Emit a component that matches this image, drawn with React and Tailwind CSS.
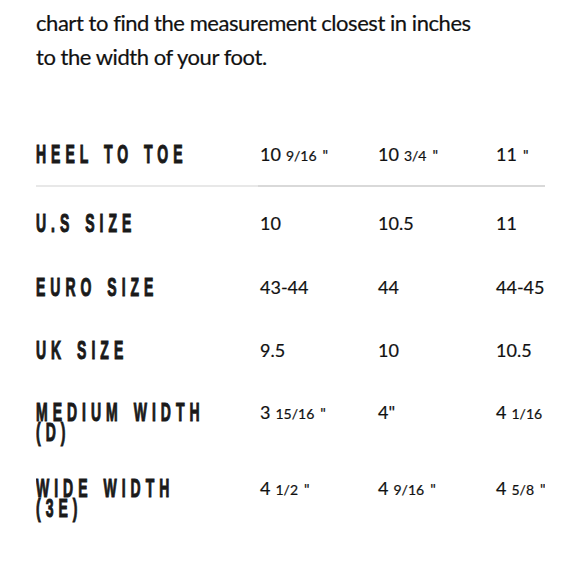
const label = "block origin-top-left scale-y-[1.8] text-[14px] leading-[10.5px] font-bold tracking-[5px] [word-spacing:2px] text-[#1a1a1a] [-webkit-text-stroke:0.6px_#1a1a1a] [font-family:'Liberation_Sans_Narrow','Liberation_Sans',sans-serif]";

function Val({ whole, frac, mark }) {
  return (
    <span className="whitespace-nowrap">
      {whole}
      {frac && <span className="ml-[5px] text-[14px]">{frac}</span>}
      {mark && <span className="ml-[6px] text-[15px]">{mark}</span>}
    </span>
  );
}

function Row({ name, values, height, divider }) {
  return (
    <div className={`flex items-start ${height}`}>
      <div className={`w-[222px] shrink-0 self-stretch ${divider ? "border-b-2 border-[#e8e8e8]" : ""}`}>
        <div className="pt-[27px]">
          {name.map((line) => (
            <div key={line} className="h-[20px]">
              <span className={label}>{line}</span>
            </div>
          ))}
        </div>
      </div>
      {values.map((v, i) => (
        <div
          key={i}
          className={`w-[118px] shrink-0 self-stretch pl-[2px] ${divider ? "border-b-2 border-[#d9d9d9]" : ""}`}
        >
          <div className="pt-[27px] text-[18px] leading-[19px] text-[#111] [-webkit-text-stroke:0.2px_#111]">{v}</div>
        </div>
      ))}
    </div>
  );
}

export default function App() {
  return (
    <div className="w-[580px] h-[580px] bg-white overflow-hidden [font-family:Lato,sans-serif]">
      <p className="pl-9 pt-[6px] text-[22px] leading-[34px] tracking-[-0.45px] text-[#111] [-webkit-text-stroke:0.2px_#111]">
        chart to find the measurement closest in inches
        <br />
        to the width of your foot.
      </p>

      <div className="ml-9 mt-[44px] w-[509px] overflow-hidden">
        <Row
          name={["HEEL TO TOE"]}
          height="h-[69px]"
          divider
          values={[
            <Val whole="10" frac="9/16" mark='"' />,
            <Val whole="10" frac="3/4" mark='"' />,
            <Val whole="11" mark='"' />,
          ]}
        />
        <Row name={["U.S SIZE"]} height="h-[64px]" values={["10", "10.5", "11"]} />
        <Row name={["EURO SIZE"]} height="h-[63px]" values={["43-44", "44", "44-45"]} />
        <Row name={["UK SIZE"]} height="h-[62px]" values={["9.5", "10", "10.5"]} />
        <Row
          name={["MEDIUM WIDTH", "(D)"]}
          height="h-[76px]"
          values={[
            <Val whole="3" frac="15/16" mark='"' />,
            <span>4"</span>,
            <Val whole="4" frac="1/16" mark='"' />,
          ]}
        />
        <Row
          name={["WIDE WIDTH", "(3E)"]}
          height="h-[90px]"
          values={[
            <Val whole="4" frac="1/2" mark='"' />,
            <Val whole="4" frac="9/16" mark='"' />,
            <Val whole="4" frac="5/8" mark='"' />,
          ]}
        />
      </div>
    </div>
  );
}
